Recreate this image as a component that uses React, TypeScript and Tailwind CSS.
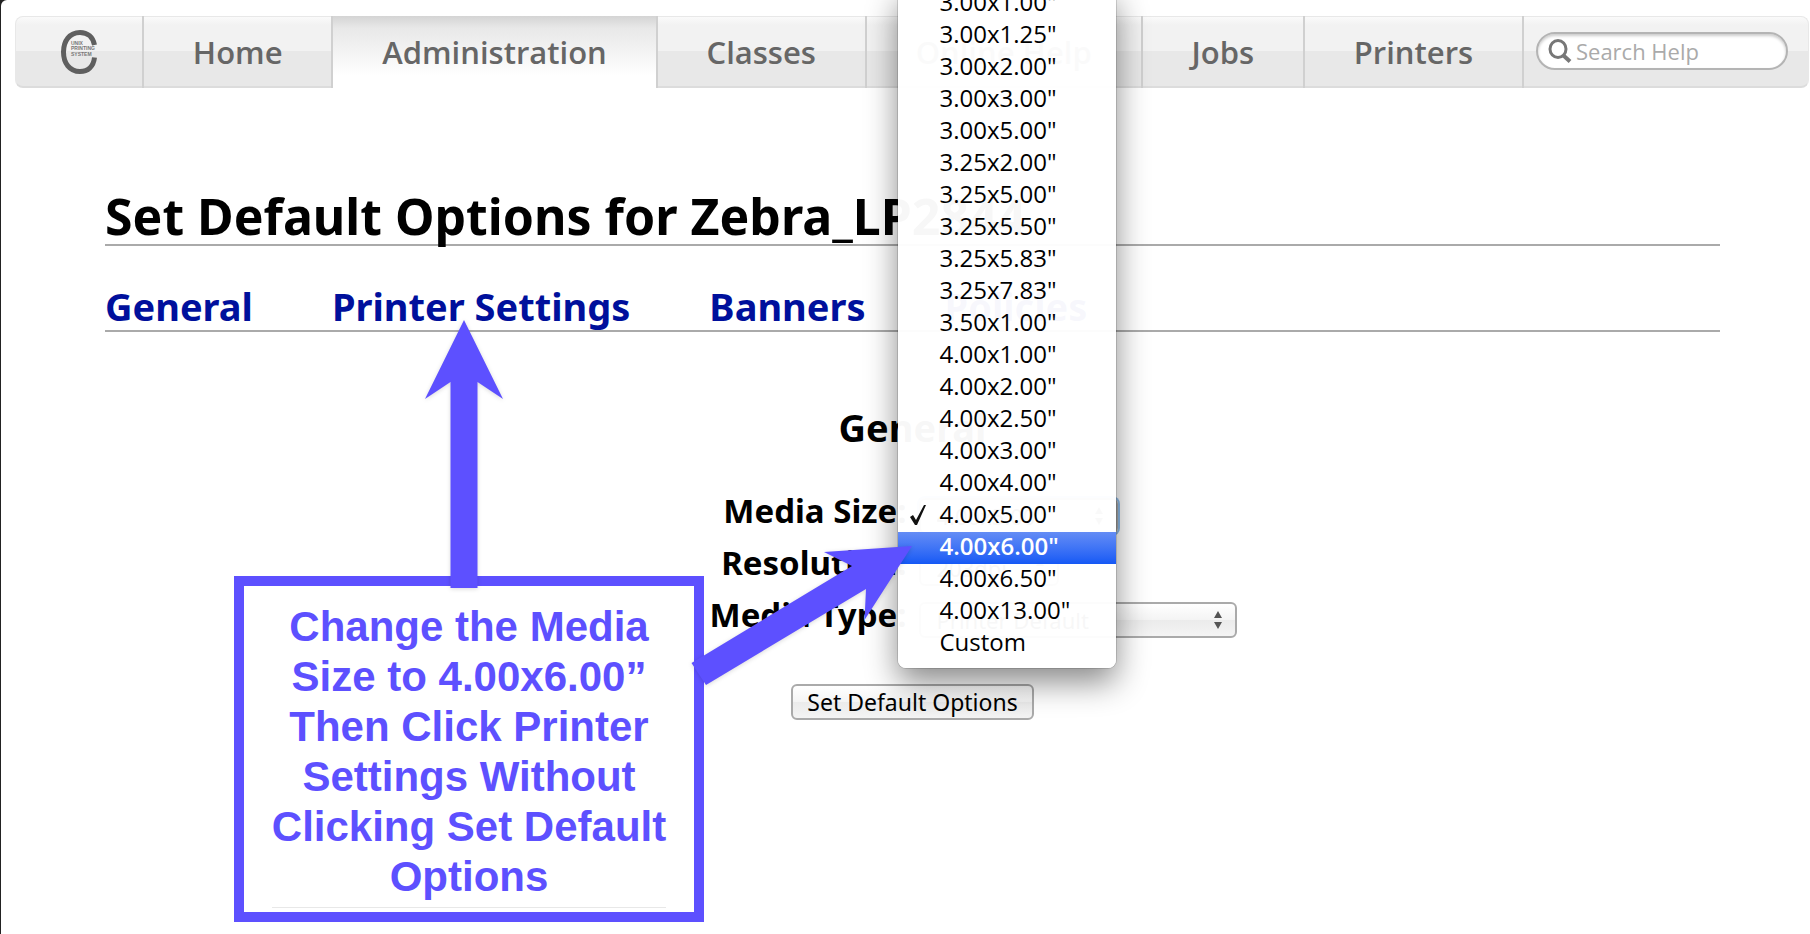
import React, { useState } from "react";

const tabs = ["Home", "Administration", "Classes", "Online Help", "Jobs", "Printers"];

const sections = ["General", "Printer Settings", "Banners", "Policies"];

const sizes = [
  '3.00x1.00"', '3.00x1.25"', '3.00x2.00"', '3.00x3.00"', '3.00x5.00"',
  '3.25x2.00"', '3.25x5.00"', '3.25x5.50"', '3.25x5.83"', '3.25x7.83"',
  '3.50x1.00"', '4.00x1.00"', '4.00x2.00"', '4.00x2.50"', '4.00x3.00"',
  '4.00x4.00"', '4.00x5.00"', '4.00x6.00"', '4.00x6.50"', '4.00x13.00"',
  "Custom",
];

function Logo() {
  return (
    <svg width="38" height="46" viewBox="0 0 38 46" aria-label="CUPS">
      <path
        d="M34.5 16 C33 8 27.5 3.5 20 3.5 C9.500 3.500 3.500 12 3.500 23 C3.500 34 9.500 42.500 20 42.500 C28 42.500 33.500 37.500 34.500 28.500"
        fill="none"
        stroke="#5f5f5f"
        strokeWidth="5"
      />
      <g fill="#777" fontSize="5" fontWeight="bold" fontFamily="Liberation Sans, sans-serif">
        <text x="11" y="16">UNIX</text>
        <text x="11" y="21">PRINTING</text>
        <text x="11" y="27">SYSTEM</text>
      </g>
    </svg>
  );
}

function Navbar() {
  return (
    <nav className="mr-px ml-[14px] flex h-[72px] rounded-lg border border-[#e8e8e8] border-b-2 border-b-[#dcdcdc] bg-[linear-gradient(#fafafa_0,#f2f2f2_8px,#f2f2f2_34px,#e8e8e8_34px)]">
      <a href="#" className="flex w-[126px] shrink-0 items-center justify-center">
        <Logo />
      </a>
      {tabs.map((tab) => (
        <a
          key={tab}
          href="#"
          className={
            tab === "Administration"
              ? "-mt-px -mb-[2px] flex flex-auto items-center justify-center border-l-2 border-[#d0d0d0] bg-[linear-gradient(#d4d4d4,#e8e8e8_12px,#fff_60px)] text-[#666]"
              : "-mt-px -mb-[2px] flex flex-auto items-center justify-center border-l-2 border-[#d0d0d0] text-[#666]"
          }
        >
          <span className="px-11 font-['Open_Sans','Noto_Sans',sans-serif] text-[31px] font-semibold whitespace-nowrap">
            {tab}
          </span>
        </a>
      ))}
      <div className="-mt-px -mb-[2px] flex w-[286px] shrink-0 items-center border-l-2 border-[#d0d0d0] pr-5 pb-[2px] pl-3">
        <label className="flex h-[38px] w-full items-center gap-1 rounded-full border-2 border-[#b4b4b4] bg-white pl-[10px] shadow-[inset_0_2px_3px_#ccc]">
          <svg width="24" height="24" viewBox="0 0 24 24" fill="none" stroke="#777" className="shrink-0">
            <ellipse cx="10" cy="10" rx="8" ry="8.500" strokeWidth="3" />
            <path d="M15.500 16.500 L22 22.500" strokeWidth="4" />
          </svg>
          <input
            type="text"
            aria-label="Search Help"
            placeholder="Search Help"
            className="w-full min-w-0 bg-transparent font-['Open_Sans','Noto_Sans',sans-serif] text-[22px] font-medium outline-none placeholder:text-[#aaa]"
          />
        </label>
      </div>
    </nav>
  );
}

function Arrows() {
  return (
    <svg width="14" height="20" viewBox="0 0 14 20" fill="#555" className="pointer-events-none absolute top-2 right-3">
      <path d="M3 8 L7 1 L11 8 Z M3 12 L7 19 L11 12 Z" />
    </svg>
  );
}

function SizeMenu({ value, onPick }: { value: string; onPick: (s: string) => void }) {
  return (
    <ul
      role="listbox"
      aria-label="Media sizes"
      className="absolute -top-[510px] -left-[21px] z-10 w-[218px] rounded-lg bg-white/97 pb-2 font-['Open_Sans','Noto_Sans',sans-serif] text-[24px] leading-7 font-medium text-black shadow-[0_0_0_1px_#0002,0_14px_32px_#0007]"
    >
      {sizes.map((s) => (
        <li
          key={s}
          role="option"
          aria-selected={s === value}
          onClick={() => onPick(s)}
          className={
            s === '4.00x6.00"'
              ? "flex h-8 items-center bg-linear-to-b from-[#648cf5] to-[#1458f5] pb-1 font-semibold text-white"
              : "flex h-8 items-center pb-1"
          }
        >
          <span className="flex w-[42px] shrink-0 justify-center">
            {s === value && (
              <svg width="18" height="22" viewBox="0 0 18 22">
                <path d="M0 14 L3 12 L6 17 L14 2 L16 2 L7 22 L5 22 Z" fill="#111" />
              </svg>
            )}
          </span>
          {s}
        </li>
      ))}
    </ul>
  );
}

function Callout() {
  return (
    <>
      <div className="absolute top-[576px] left-[233px] z-20 w-[470px] border-10 border-[#5d50ff] bg-white px-3 pt-4 text-center font-['Liberation_Sans',Arial,sans-serif] text-[42px] leading-[50px] font-bold text-[#5d50ff]">
        Change the Media Size to 4.00x6.00” Then Click Printer Settings Without Clicking Set Default Options
        <div className="mx-4 mt-[5px] mb-1 h-px bg-[#e8e8e8]" />
      </div>
      <svg
        width="960"
        height="700"
        viewBox="0 0 960 700"
        fill="#5d50ff"
        className="pointer-events-none absolute top-0 left-0 z-30 -ml-px drop-shadow-sm"
      >
        <path d="M464 320 L503 399 L477.500 382 V588 H450.500 V382 L425 399 Z" />
        <path d="M912 546 L864.500 620 L866 589 L706 685 L691.500 663 L852 566 L824 552 Z" />
      </svg>
    </>
  );
}

const selectClass =
  "h-9 w-full appearance-none rounded-md border-2 border-[#aaa] bg-[linear-gradient(#fff,#f4f4f4_50%,#ebebeb_50%,#f4f4f4)] px-4 text-[22px] leading-7 text-black";

const labelClass = "text-right text-[33px] leading-[26px] font-bold";

export default function App() {
  const [size, setSize] = useState('4.00x5.00"');

  return (
    <div className="min-h-screen bg-[#222]">
      <div className="relative ml-px min-h-screen overflow-hidden rounded-tl-md bg-white pt-4 font-['Noto_Sans','Open_Sans',sans-serif] text-black">
        <Navbar />

        <main className="mr-[90px] ml-[104px] pt-[100px]">
          <h1 className="border-b-2 border-[#aaa] text-[50px] leading-14 font-bold">
            Set Default Options for Zebra_LP2844
          </h1>

          <div className="flex gap-[79px] border-b-2 border-[#aaa] pt-[38px] pb-[2px] text-[38px] leading-11 font-bold text-[#00109c]">
            {sections.map((s) => (
              <a key={s} href="#">{s}</a>
            ))}
          </div>

          <form onSubmit={(e) => e.preventDefault()}>
            <h2 className="pt-[71px] text-center text-[38px] leading-12 font-bold">General</h2>

            <div className="grid grid-cols-2 gap-x-3 gap-y-4 pt-[47px]">
              <label htmlFor="size" className={labelClass}>Media Size:</label>
              <div className="relative w-[199px]">
                <select
                  id="size"
                  value={size}
                  onChange={(e) => setSize(e.target.value)}
                  className={selectClass + " shadow-[0_0_0_2px_#8fbbe8]"}
                >
                  {sizes.map((s) => (
                    <option key={s}>{s}</option>
                  ))}
                </select>
                <Arrows />
                <SizeMenu value={size} onPick={setSize} />
              </div>

              <label htmlFor="resolution" className={labelClass}>Resolution:</label>
              <div className="relative w-[140px]">
                <select id="resolution" className={selectClass}>
                  <option>203dpi</option>
                </select>
                <Arrows />
              </div>

              <label htmlFor="type" className={labelClass}>Media Type:</label>
              <div className="relative w-[318px]">
                <select id="type" className={selectClass}>
                  <option>Printer Default</option>
                </select>
                <Arrows />
              </div>
            </div>

            <div className="flex justify-center pt-[46px]">
              <button
                type="submit"
                className="h-9 rounded-md border-2 border-[#aaa] bg-[linear-gradient(#fff,#f4f4f4_50%,#ebebeb_50%,#f4f4f4)] px-[14px] text-[23px] leading-8"
              >
                Set Default Options
              </button>
            </div>
          </form>
        </main>

        <Callout />
      </div>
    </div>
  );
}
